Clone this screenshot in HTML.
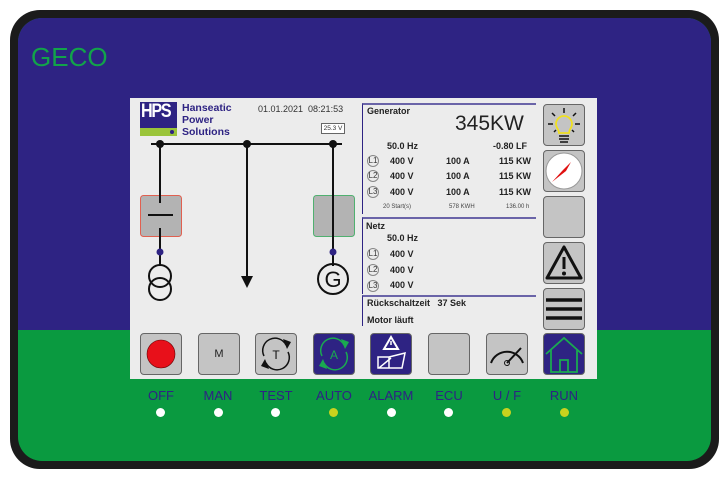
<!DOCTYPE html>
<html><head><meta charset="utf-8"><style>
*{margin:0;padding:0;box-sizing:border-box}
body{width:728px;height:481px;background:#fff;position:relative;overflow:hidden;font-family:"Liberation Sans",sans-serif}
.a{position:absolute}
.btn{position:absolute;width:42px;height:42px;background:#c4c4c4;border:1px solid #666;border-radius:4px}
.bl{background:#2e2383}
.lbl{position:absolute;top:388px;width:70px;text-align:center;color:#2e2383;font-size:13px}
.dot{position:absolute;top:408px;width:9px;height:9px;border-radius:50%;background:#fff}
.y{background:#c8d21e}
.t{position:absolute;font-size:9px;font-weight:bold;color:#222}
.L{position:absolute;width:12px;height:12px;border:1px solid #888;border-radius:50%;font-size:8px;text-align:center;line-height:10px;color:#333}
</style></head><body>
<div class="a" style="left:10px;top:10px;width:709px;height:459px;background:#1b1b1b;border-radius:30px"></div>
<div class="a" style="left:18px;top:18px;width:693px;height:443px;border-radius:24px;overflow:hidden;background:#0a9a40">
<div class="a" style="left:0;top:0;width:693px;height:312px;background:#2e2383"></div>
</div>
<div class="a" style="left:31px;top:42px;color:#12a34a;font-size:26px">GECO</div>
<div class="a" style="left:130px;top:98px;width:467px;height:281px;background:#ececec"></div>
<!-- logo -->
<div class="a" style="left:140px;top:102px;width:37px;height:34px;background:#2e2383"></div>
<div class="a" style="left:140px;top:128px;width:37px;height:8px;background:#9ac43a"></div>
<div class="a" style="left:170px;top:130px;width:4px;height:4px;border-radius:50%;background:#2e2383"></div>
<div class="a" style="left:141px;top:101px;color:#fff;font-weight:bold;font-size:19px;letter-spacing:-1.5px;transform:scaleX(0.85);transform-origin:left">HPS</div>
<div class="a" style="left:182px;top:102px;color:#2e2383;font-weight:bold;font-size:10.5px;line-height:12px">Hanseatic<br>Power<br>Solutions</div>
<div class="a" style="left:258px;top:104px;font-size:9px;color:#333">01.01.2021&nbsp; 08:21:53</div>
<div class="a" style="left:321px;top:123px;width:24px;height:11px;border:1px solid #666;font-size:6.5px;text-align:center;line-height:9px;color:#333;background:#fff">25.3 V</div>
<svg class="a" style="left:130px;top:98px" width="230" height="230">
<g stroke="#111" stroke-width="2" fill="none">
<line x1="21" y1="46" x2="212" y2="46"/>
<line x1="30" y1="46" x2="30" y2="98"/>
<line x1="117" y1="46" x2="117" y2="180"/>
<line x1="203" y1="46" x2="203" y2="98"/>
</g>
<polygon points="111,178 123,178 117,190" fill="#111"/>
<circle cx="30" cy="46" r="4" fill="#111"/><circle cx="117" cy="46" r="4" fill="#111"/><circle cx="203" cy="46" r="4" fill="#111"/>
<rect x="10.5" y="97.5" width="41" height="41" rx="3" fill="#b3b3b3" stroke="#e06050"/>
<rect x="183.5" y="97.5" width="41" height="41" rx="3" fill="#b3b3b3" stroke="#50b070"/>
<g stroke="#111" stroke-width="2" fill="none">
<line x1="18" y1="117" x2="43" y2="117"/>
<line x1="30" y1="97" x2="30" y2="105"/><line x1="30" y1="130" x2="30" y2="168"/>
<line x1="203" y1="97" x2="203" y2="168"/>
<circle cx="30" cy="178" r="11"/><circle cx="30" cy="191" r="11"/>
<circle cx="203" cy="181" r="15"/>
</g>
<circle cx="30" cy="154" r="3.5" fill="#2e2383"/><circle cx="203" cy="154" r="3.5" fill="#2e2383"/>
<text x="203" y="189" font-size="22" text-anchor="middle" fill="#111" font-family="Liberation Sans">G</text>
</svg>
<!-- generator panel -->
<div class="a" style="left:362px;top:103px;width:174px;height:111px;border-left:1px solid #2e2383;border-top:2px solid #6a64a8"></div>
<div class="a" style="left:362px;top:217px;width:174px;height:77px;border-left:1px solid #2e2383;border-top:2px solid #6a64a8"></div>
<div class="a" style="left:362px;top:295px;width:174px;height:31px;border-left:1px solid #2e2383;border-top:2px solid #6a64a8"></div>
<div class="t" style="left:367px;top:106px">Generator</div>
<div class="a" style="left:455px;top:112px;font-size:21px;color:#222">345KW</div>
<div class="t" style="left:387px;top:141px">50.0 Hz</div>
<div class="t" style="left:493px;top:141px">-0.80 LF</div>
<div class="L" style="left:367px;top:155px">L1</div><div class="t" style="left:390px;top:156px">400 V</div><div class="t" style="left:446px;top:156px">100 A</div><div class="t" style="left:499px;top:156px">115 KW</div>
<div class="L" style="left:367px;top:170px">L2</div><div class="t" style="left:390px;top:171px">400 V</div><div class="t" style="left:446px;top:171px">100 A</div><div class="t" style="left:499px;top:171px">115 KW</div>
<div class="L" style="left:367px;top:186px">L3</div><div class="t" style="left:390px;top:187px">400 V</div><div class="t" style="left:446px;top:187px">100 A</div><div class="t" style="left:499px;top:187px">115 KW</div>
<div class="a" style="left:383px;top:204px;font-size:6px;color:#444">20 Start(s)</div>
<div class="a" style="left:449px;top:204px;font-size:6px;color:#444">578 KWH</div>
<div class="a" style="left:506px;top:204px;font-size:6px;color:#444">136.00 h</div>
<div class="t" style="left:366px;top:221px">Netz</div>
<div class="t" style="left:387px;top:233px">50.0 Hz</div>
<div class="L" style="left:367px;top:248px">L1</div><div class="t" style="left:390px;top:249px">400 V</div>
<div class="L" style="left:367px;top:264px">L2</div><div class="t" style="left:390px;top:265px">400 V</div>
<div class="L" style="left:367px;top:280px">L3</div><div class="t" style="left:390px;top:280px">400 V</div>
<div class="t" style="left:367px;top:298px">Rückschaltzeit&nbsp;&nbsp; 37 Sek</div>
<div class="t" style="left:367px;top:315px">Motor läuft</div>
<!-- right buttons -->
<div class="btn" style="left:543px;top:104px"><svg width="40" height="40"><g stroke="#111" stroke-width="1.5"><line x1="20" y1="3" x2="20" y2="8"/><line x1="8" y1="8" x2="11" y2="11"/><line x1="32" y1="8" x2="29" y2="11"/><line x1="4" y1="19" x2="9" y2="19"/><line x1="31" y1="19" x2="36" y2="19"/><line x1="10" y1="27" x2="12" y2="25"/><line x1="30" y1="27" x2="28" y2="25"/><line x1="15" y1="31" x2="25" y2="31"/><line x1="15" y1="34" x2="25" y2="34"/><line x1="16" y1="37" x2="24" y2="37"/></g><path d="M15 28 C15 24 12 23 12 19 A8 8 0 0 1 28 19 C28 23 25 24 25 28 Z" fill="none" stroke="#f0e020" stroke-width="1.8"/></svg></div>
<div class="btn" style="left:543px;top:150px"><svg width="40" height="40"><circle cx="20" cy="20" r="18" fill="#fff" stroke="#999"/><polygon points="8,31 22,20 27,11 19,19" fill="#e01010"/></svg></div>
<div class="btn" style="left:543px;top:196px"></div>
<div class="btn" style="left:543px;top:242px"><svg width="40" height="40"><polygon points="20,4 37,35 3,35" fill="none" stroke="#111" stroke-width="3" stroke-linejoin="round"/><line x1="20" y1="14" x2="20" y2="26" stroke="#111" stroke-width="3"/><circle cx="20" cy="30.5" r="2" fill="#111"/></svg></div>
<div class="btn" style="left:543px;top:288px"><svg width="40" height="40"><g stroke="#111" stroke-width="3.5"><line x1="2" y1="11" x2="38" y2="11"/><line x1="2" y1="20" x2="38" y2="20"/><line x1="2" y1="29" x2="38" y2="29"/></g></svg></div>
<!-- bottom buttons -->
<div class="btn" style="left:140px;top:333px"><svg width="40" height="40"><circle cx="20" cy="20" r="14" fill="#e8101a" stroke="#600" stroke-width=".6"/></svg></div>
<div class="btn" style="left:198px;top:333px;text-align:center;line-height:40px;font-size:11px;color:#222">M</div>
<div class="btn" style="left:255px;top:333px"><svg width="40" height="40"><path d="M8 22 A12 12 0 0 1 30 11" fill="none" stroke="#111" stroke-width="1.5"/><path d="M32 18 A12 12 0 0 1 10 29" fill="none" stroke="#111" stroke-width="1.5"/><polygon points="27,5 35,8 31,15" fill="#111"/><polygon points="13,35 5,32 9,25" fill="#111"/><text x="20" y="25" font-size="12" text-anchor="middle" fill="#111" font-family="Liberation Sans">T</text></svg></div>
<div class="btn bl" style="left:313px;top:333px"><svg width="40" height="40"><path d="M8 22 A12 12 0 0 1 30 11" fill="none" stroke="#1aaa50" stroke-width="1.5"/><path d="M32 18 A12 12 0 0 1 10 29" fill="none" stroke="#1aaa50" stroke-width="1.5"/><polygon points="27,5 35,8 31,15" fill="#1aaa50"/><polygon points="13,35 5,32 9,25" fill="#1aaa50"/><text x="20" y="25" font-size="12" text-anchor="middle" fill="#1aaa50" font-family="Liberation Sans">A</text></svg></div>
<div class="btn bl" style="left:370px;top:333px"><svg width="40" height="40"><polygon points="20,3 27,15 13,15" fill="none" stroke="#fff" stroke-width="2"/><line x1="20" y1="7" x2="20" y2="11" stroke="#fff" stroke-width="1.5"/><path d="M7 23 H18 V34 H7 Z M18 23 L34 19 L31 34 L18 34 M8 34 L20 24" fill="none" stroke="#fff" stroke-width="1.5"/></svg></div>
<div class="btn" style="left:428px;top:333px"></div>
<div class="btn" style="left:486px;top:333px"><svg width="40" height="40"><path d="M4 29 A17 17 0 0 1 36 29" fill="none" stroke="#111" stroke-width="2"/><line x1="20" y1="29" x2="34" y2="14" stroke="#111" stroke-width="2"/><circle cx="20" cy="29" r="2.5" fill="none" stroke="#111"/></svg></div>
<div class="btn bl" style="left:543px;top:333px"><svg width="40" height="40"><path d="M2 20 L20 4 L38 20 M7 16 V38 H33 V16 M16 38 V26 H24 V38" fill="none" stroke="#1aaa50" stroke-width="1.8"/></svg></div>
<!-- labels -->
<div class="lbl" style="left:126px">OFF</div><div class="lbl" style="left:183px">MAN</div><div class="lbl" style="left:241px">TEST</div><div class="lbl" style="left:299px">AUTO</div><div class="lbl" style="left:356px">ALARM</div><div class="lbl" style="left:414px">ECU</div><div class="lbl" style="left:472px">U / F</div><div class="lbl" style="left:529px">RUN</div>
<div class="dot" style="left:156px"></div><div class="dot" style="left:214px"></div><div class="dot" style="left:271px"></div><div class="dot y" style="left:329px"></div><div class="dot" style="left:387px"></div><div class="dot" style="left:444px"></div><div class="dot y" style="left:502px"></div><div class="dot y" style="left:560px"></div>
</body></html>
